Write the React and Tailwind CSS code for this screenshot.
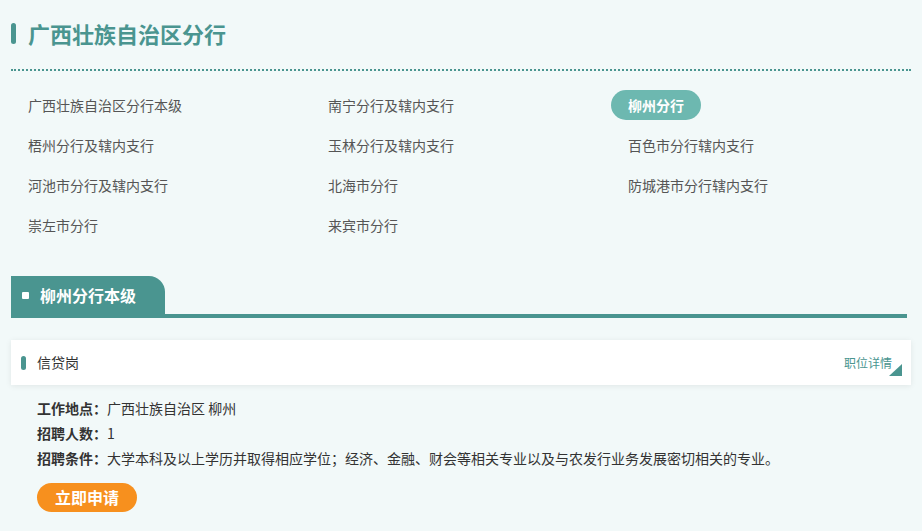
const BRANCHES = [
  "广西壮族自治区分行本级",
  "南宁分行及辖内支行",
  "柳州分行",
  "梧州分行及辖内支行",
  "玉林分行及辖内支行",
  "百色市分行辖内支行",
  "河池市分行及辖内支行",
  "北海市分行",
  "防城港市分行辖内支行",
  "崇左市分行",
  "来宾市分行",
];

const ACTIVE = "柳州分行";

function JobCard() {
  return (
    <div className="mt-[22px]">
      <div className="relative bg-white h-[45px] flex items-center shadow-[0_1px_6px_rgba(0,0,0,0.08)]">
        <span className="ml-[10px] w-[5px] h-[14px] rounded-full bg-[#4a9590]" />
        <span className="ml-[11px] text-[14px] text-[#333]">信贷岗</span>
        <span className="ml-auto mr-[19px] text-[12px] text-[#4a9590]">职位详情</span>
        <span className="absolute right-[9px] bottom-[9px] w-0 h-0 border-l-[13px] border-l-transparent border-b-[12px] border-b-[#4a9590]" />
      </div>
      <div className="pl-[26px] pt-[11px] text-[14px] text-[#333] leading-[25px]">
        <p><span className="font-bold">工作地点：</span>广西壮族自治区 柳州</p>
        <p><span className="font-bold">招聘人数：</span>1</p>
        <p><span className="font-bold">招聘条件：</span>大学本科及以上学历并取得相应学位；经济、金融、财会等相关专业以及与农发行业务发展密切相关的专业。</p>
        <button className="mt-[12px] h-[29px] w-[100px] rounded-full bg-[#f7901e] text-white text-[16px] font-bold leading-[29px]">
          立即申请
        </button>
      </div>
    </div>
  );
}

export default function App() {
  return (
    <div
      className="w-[922px] h-[531px] overflow-hidden bg-[#f2f9f9] px-[11px]"
      style={{ fontFamily: '"Noto Sans CJK SC", "Noto Sans", sans-serif' }}
    >
      <div className="flex items-center pt-[18px] h-[48px]">
        <span className="w-[5px] h-[21px] rounded-full bg-[#4a9590]" />
        <h1 className="ml-[12px] text-[22px] font-bold text-[#4a9590] leading-none">广西壮族自治区分行</h1>
      </div>
      <div className="mt-[21px] border-t-2 border-dotted border-[#4a9590]" />

      <div className="grid grid-cols-[300px_300px_300px] mt-[14px]">
        {BRANCHES.map((b) =>
          b === ACTIVE ? (
            <div key={b} className="h-[40px] flex items-center">
              <span className="h-[30px] px-[17px] rounded-full bg-[#6db8b0] text-white text-[14px] font-bold flex items-center">
                {b}
              </span>
            </div>
          ) : (
            <div key={b} className="h-[40px] flex items-center pl-[17px] text-[14px] text-[#555]">
              {b}
            </div>
          )
        )}
      </div>

      <div className="mt-[31px] mr-[4px] border-b-[4px] border-[#4a9590] flex">
        <div className="h-[38px] w-[154px] bg-[#4a9590] rounded-tr-[16px] flex items-center">
          <span className="ml-[11px] w-[7px] h-[7px] rounded-[1px] bg-white" />
          <span className="ml-[11px] text-[16px] font-bold text-white">柳州分行本级</span>
        </div>
      </div>

      <JobCard />
    </div>
  );
}
